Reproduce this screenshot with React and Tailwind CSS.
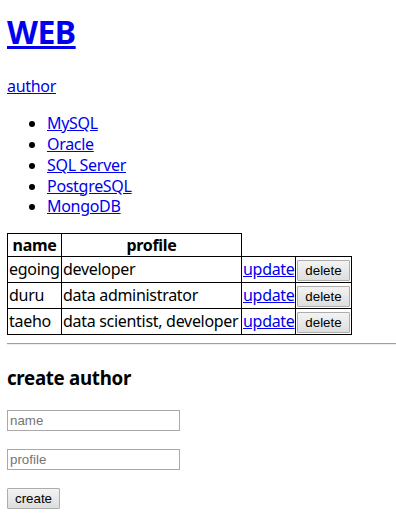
import React from "react";

const dbs = ["MySQL", "Oracle", "SQL Server", "PostgreSQL", "MongoDB"];

const authors = [
  { name: "egoing", profile: "developer" },
  { name: "duru", profile: "data administrator" },
  { name: "taeho", profile: "data scientist, developer" },
];

const linkCls = "text-[#0000ee] underline";
const btnCls =
  "block font-['Liberation_Sans',Arial,sans-serif] text-[13.33px] tracking-normal text-black border border-[#adadad] rounded-[1px] bg-gradient-to-b from-[#f3f3f3] to-[#dedede]";

const App = () => {
  return (
    <div className="min-h-[522px] bg-white pl-[7px] pt-[11px] text-black text-[16px] tracking-[-0.3px] font-['Noto_Sans','Noto_Sans_CJK_KR',sans-serif]">
      <h1 className="text-[32px] font-bold leading-[42px] tracking-[-0.5px]">
        <a href="#" className={linkCls}>
          WEB
        </a>
      </h1>
      <p className="mt-[22.9px] leading-[20.8px]">
        <a href="#" className={linkCls}>
          author
        </a>
      </p>
      <ul className="mt-[16.6px] list-disc pl-[40px] leading-[20.8px]">
        {dbs.map((db) => (
          <li key={db}>
            <a href="#" className={linkCls}>
              {db}
            </a>
          </li>
        ))}
      </ul>

      <table className="mt-[15.7px] w-[344px] border-collapse table-fixed leading-[20.8px]">
        <colgroup>
          <col className="w-[54px]" />
          <col className="w-[180px]" />
          <col className="w-[54px]" />
          <col className="w-[56px]" />
        </colgroup>
        <thead>
          <tr className="h-[23px]">
            <th className="border border-black px-[1px] py-0 text-center font-bold">name</th>
            <th className="border border-black px-[1px] py-0 text-center font-bold">profile</th>
          </tr>
        </thead>
        <tbody>
          {authors.map((a) => (
            <tr key={a.name} className="h-[26px]">
              <td className="border border-black px-[1px] py-0 align-middle whitespace-nowrap overflow-hidden">{a.name}</td>
              <td className="border border-black px-[1px] py-0 align-middle whitespace-nowrap overflow-hidden">{a.profile}</td>
              <td className="border border-black px-[1px] py-0 align-middle whitespace-nowrap">
                <a href="#" className={linkCls}>
                  update
                </a>
              </td>
              <td className="border border-black px-[1px] pt-0 pb-[1px] align-bottom">
                <button className={`${btnCls} w-[53px] h-[21px] leading-[19px]`}>delete</button>
              </td>
            </tr>
          ))}
        </tbody>
      </table>

      <div className="mt-[8px] h-[2px] border-t border-t-[#a0a0a0] border-b border-b-[#eeeeee]" />

      <h3 className="mt-[21.5px] text-[18.72px] font-bold leading-[24px]">create author</h3>

      <form onSubmit={(e) => e.preventDefault()}>
        <input
          type="text"
          placeholder="name"
          className="block mt-[19.5px] w-[173px] h-[21px] border border-[#a9a9a9] px-[2px] font-['Liberation_Sans',Arial,sans-serif] text-[13.33px] tracking-normal placeholder:text-[#757575] outline-none"
        />
        <input
          type="text"
          placeholder="profile"
          className="block mt-[18px] w-[173px] h-[21px] border border-[#a9a9a9] px-[2px] font-['Liberation_Sans',Arial,sans-serif] text-[13.33px] tracking-normal placeholder:text-[#757575] outline-none"
        />
        <button type="submit" className={`${btnCls} mt-[18px] w-[53px] h-[21px] leading-[19px]`}>
          create
        </button>
      </form>
    </div>
  );
};

export default App;
